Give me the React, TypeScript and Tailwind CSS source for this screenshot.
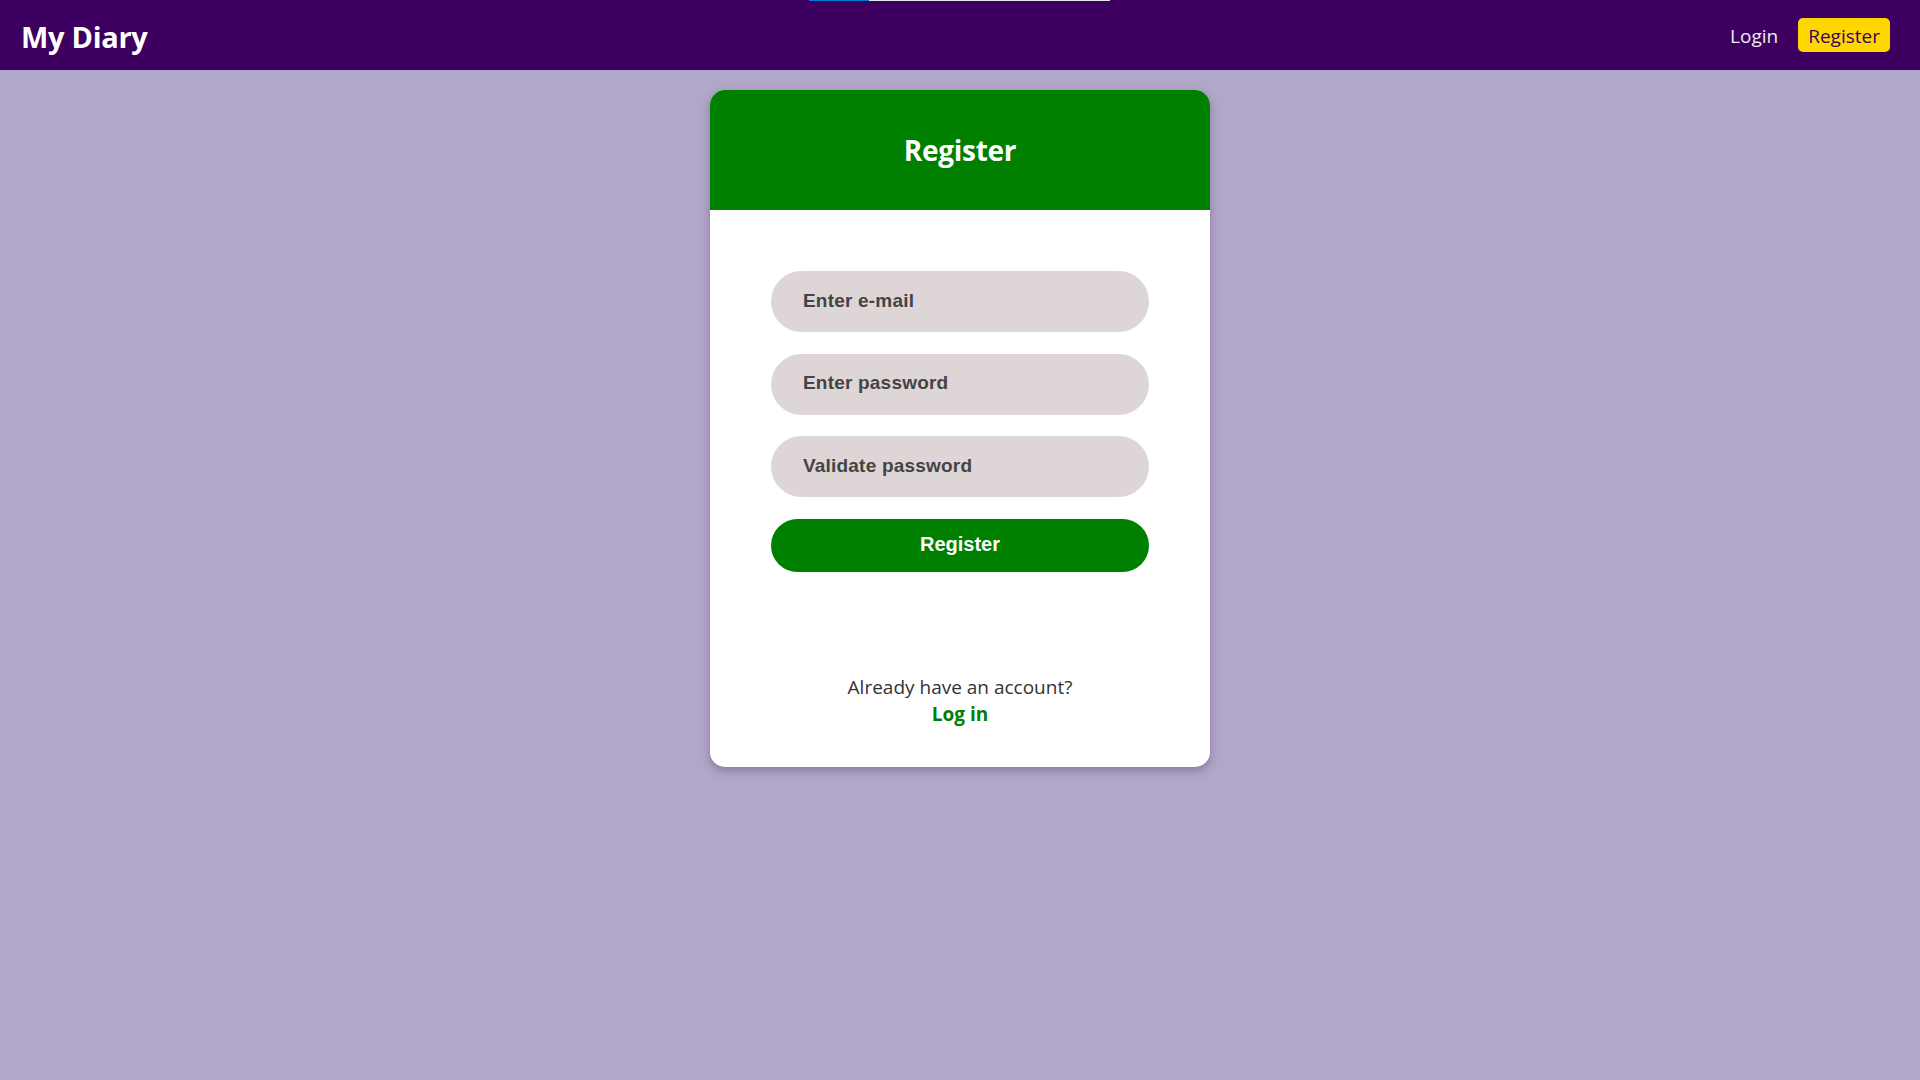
import { useState } from 'react';

const uiFont = "font-['Open_Sans',sans-serif]";

function NavBar() {
  return (
    <header className="relative h-[70px] bg-[#3d0060] flex items-center justify-between pl-[21px] pr-[30px]">
      {/* browser loading strip */}
      <div className="absolute top-0 left-[809px] flex h-px">
        <div className="w-[60px] bg-[#0078d4]" />
        <div className="w-[241px] bg-[#e6e6e6]" />
      </div>
      <h1 className={`${uiFont} pt-[3px] text-[29px] font-bold text-white tracking-[-0.3px]`}>My Diary</h1>
      <nav className={`${uiFont} flex items-center gap-[20px] text-[19px]`}>
        <a className="pt-[3px] text-[#eeeaf2] cursor-pointer">Login</a>
        <a className="h-[34px] px-[10px] pt-[3px] flex items-center rounded-[5px] bg-[#ffd700] text-[#3d0060] cursor-pointer">
          Register
        </a>
      </nav>
    </header>
  );
}

function Field(props: { placeholder: string; type?: string }) {
  const [value, setValue] = useState('');
  return (
    <input
      type={props.type ?? 'text'}
      value={value}
      onChange={(e) => setValue(e.target.value)}
      placeholder={props.placeholder}
      className="w-full h-[61px] rounded-full bg-[#ddd5d6] pl-[32px] pr-6 pb-[2px] font-['Liberation_Sans',Arial,sans-serif] text-[19px] font-bold tracking-[0.2px] text-[#444] placeholder:text-[#444] outline-none"
    />
  );
}

export default function App() {
  return (
    <div className="min-h-screen bg-[#b1a7c8]">
      <NavBar />
      <main className="flex justify-center pt-5">
        <section className="w-[500px] bg-white rounded-[15px] overflow-hidden shadow-[0_4px_10px_rgba(60,40,90,0.35)]">
          {/* Card header */}
          <div className="h-[120px] bg-[#008000] flex items-center justify-center">
            <h2 className={`${uiFont} text-[28px] font-bold text-white tracking-[-0.3px]`}>Register</h2>
          </div>

          {/* Form */}
          <form className="flex flex-col gap-[21.5px] px-[61px] pt-[61px]" onSubmit={(e) => e.preventDefault()}>
            <Field placeholder="Enter e-mail" type="email" />
            <Field placeholder="Enter password" type="password" />
            <Field placeholder="Validate password" type="password" />
            <button
              type="submit"
              className="h-[53px] w-full rounded-full bg-[#008000] pb-[2px] font-['Liberation_Sans',Arial,sans-serif] text-[20px] font-bold text-white cursor-pointer"
            >
              Register
            </button>
          </form>

          {/* Footer link */}
          <div className={`${uiFont} flex flex-col items-center pt-[102px] pb-[39px] text-[19px] leading-[27px]`}>
            <p className="text-[#333]">Already have an account?</p>
            <a className="font-bold text-[#008000] cursor-pointer">Log in</a>
          </div>
        </section>
      </main>
    </div>
  );
}
